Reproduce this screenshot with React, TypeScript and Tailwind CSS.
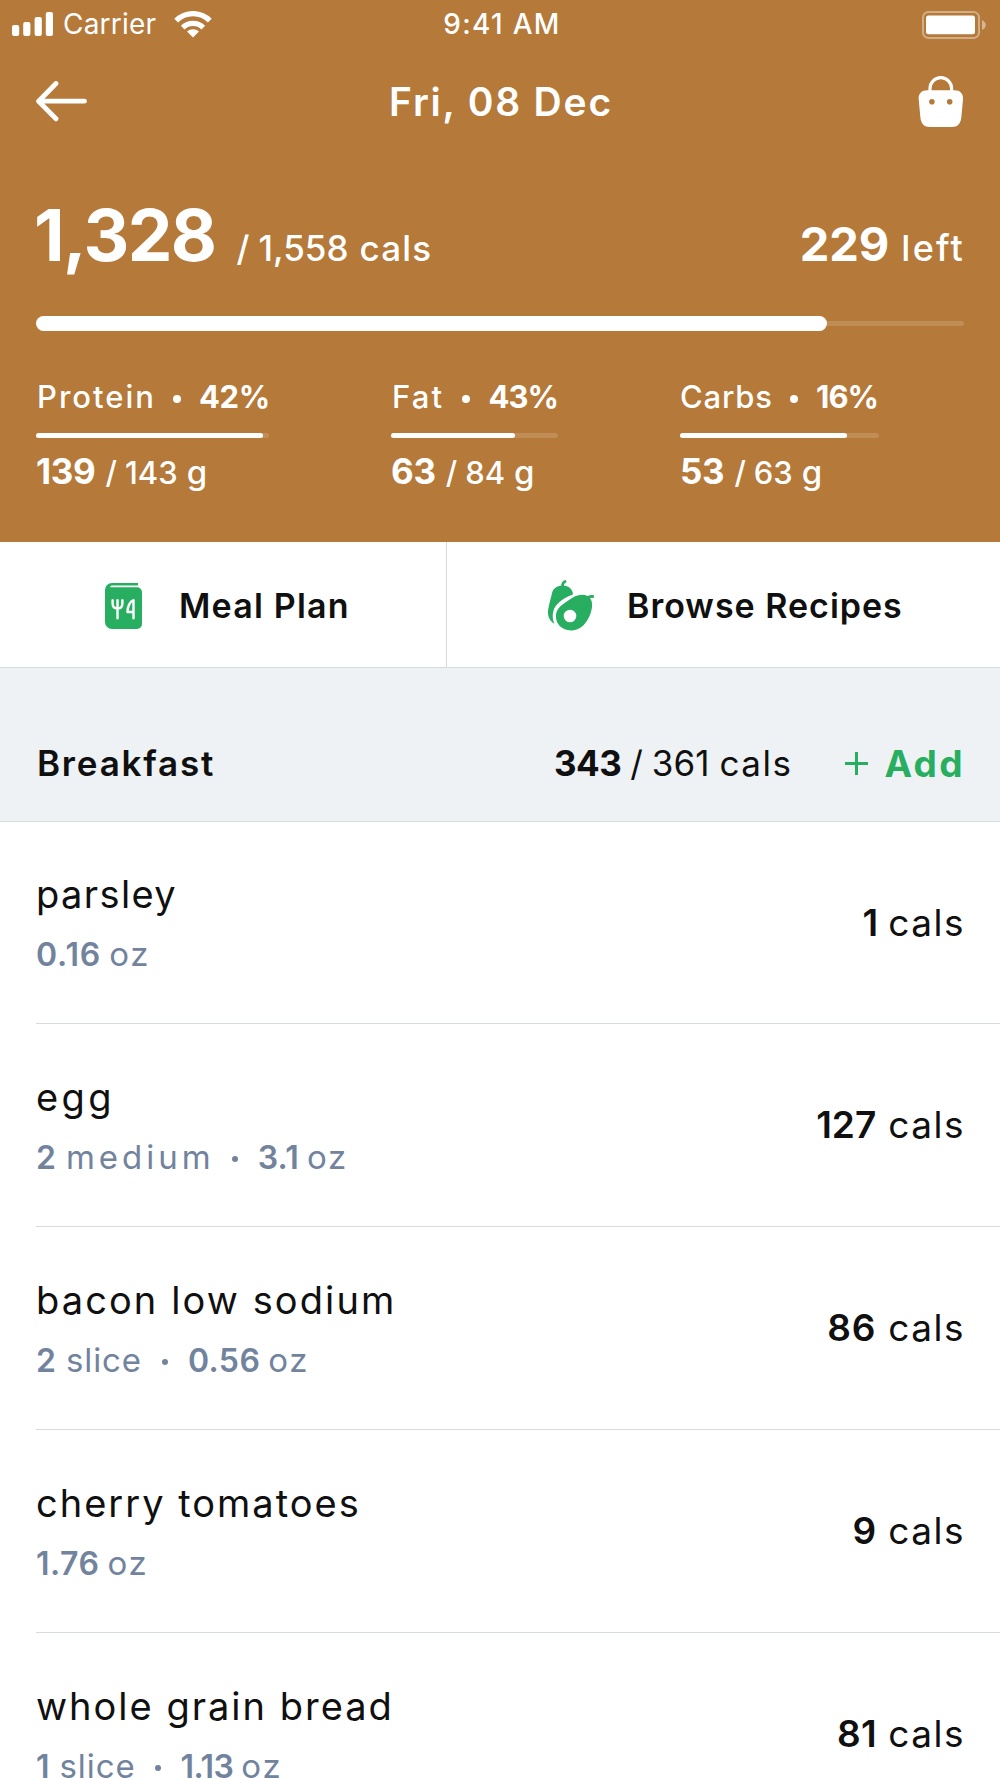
import React from 'react';

interface Macro {
  name: string;
  nameClass: string;
  percent: string;
  percentClass: string;
  eaten: number;
  goal: number;
  fill: number;
  width: string;
}

interface Food {
  name: string;
  nameClass: string;
  serving?: { count: string; unit: string; unitClass: string };
  ounces: string;
  ouncesClass: string;
  cals: number;
  calsClass: string;
}

const MACROS: Macro[] = [
  { name: 'Protein', nameClass: 'ml-px tracking-[2px]', percent: '42%', percentClass: '-mr-px tracking-[-0.3px]', eaten: 139, goal: 143, fill: 97.6, width: 'w-[233px]' },
  { name: 'Fat', nameClass: 'ml-px tracking-[2.2px]', percent: '43%', percentClass: 'tracking-[-1px]', eaten: 63, goal: 84, fill: 74, width: 'w-[167px]' },
  { name: 'Carbs', nameClass: 'tracking-[0.8px]', percent: '16%', percentClass: 'mr-px tracking-[-1px]', eaten: 53, goal: 63, fill: 83.7, width: 'w-[199px]' },
];

const FOODS: Food[] = [
  { name: 'parsley', nameClass: 'tracking-[1.4px]', ounces: '0.16', ouncesClass: 'tracking-[0.9px]', cals: 1, calsClass: 'mr-[10px]' },
  { name: 'egg', nameClass: 'tracking-[3.4px]', serving: { count: '2', unit: 'medium', unitClass: 'tracking-[4px] mr-[17px]' }, ounces: '3.1', ouncesClass: 'tracking-[0.2px]', cals: 127, calsClass: 'mr-[12px]' },
  { name: 'bacon low sodium', nameClass: 'tracking-[2.1px]', serving: { count: '2', unit: 'slice', unitClass: 'tracking-[0.9px] mr-[20px]' }, ounces: '0.56', ouncesClass: 'tracking-[0.4px]', cals: 86, calsClass: 'mr-[12px] tracking-[0.8px]' },
  { name: 'cherry tomatoes', nameClass: 'tracking-[2px]', ounces: '1.76', ouncesClass: 'tracking-[0.5px]', cals: 9, calsClass: 'mr-[12px]' },
  { name: 'whole grain bread', nameClass: 'tracking-[2px]', serving: { count: '1', unit: 'slice', unitClass: 'tracking-[0.9px] mr-[19px]' }, ounces: '1.13', ouncesClass: 'tracking-[-0.5px]', cals: 81, calsClass: 'mr-[11px] tracking-[0.5px]' },
];

const SignalIcon = () => (
  <svg width="41" height="24" viewBox="0 0 41 24" fill="currentColor">
    <rect x="0" y="13" width="7.2" height="11" rx="2" />
    <rect x="11.2" y="10" width="7.2" height="14" rx="2" />
    <rect x="22.6" y="5" width="7.2" height="19" rx="2" />
    <rect x="33.8" y="0" width="7.2" height="24" rx="2" />
  </svg>
);

const WifiIcon = () => (
  <svg width="38" height="27" viewBox="0 0 38 27" fill="none" stroke="currentColor">
    <path d="M2.2 9.7a23.6 23.6 0 0 1 33.6 0" strokeWidth="5.4" />
    <path d="M8.7 16.6a14.6 14.6 0 0 1 20.6 0" strokeWidth="5.2" />
    <path d="M13 20.6a8.6 8.6 0 0 1 12 0L19 26.6Z" fill="currentColor" stroke="none" />
  </svg>
);

const BatteryIcon = () => (
  <svg width="65" height="28" viewBox="0 0 65 28" fill="none">
    <rect x="1" y="1" width="56" height="26" rx="5.5" stroke="white" strokeOpacity="0.4" strokeWidth="2" />
    <rect x="4" y="4.5" width="49" height="18.7" rx="2.5" fill="white" />
    <path d="M60 9c5 2 5 8 0 10Z" fill="white" fillOpacity="0.45" />
  </svg>
);

const BackIcon = () => (
  <svg width="51" height="41" viewBox="0 0 51 41" fill="none" stroke="currentColor" strokeWidth="4.8" strokeLinecap="round" strokeLinejoin="round">
    <path d="M20 2.5 2.6 20.2 20 37.8M3 20.2H48.5" />
  </svg>
);

const BagIcon = () => (
  <svg width="46" height="51" viewBox="0 0 46 51" fill="none">
    <path d="M12 16v-3.5a10.8 10.8 0 0 1 21.6 0V16" stroke="white" strokeWidth="3.2" />
    <path
      fillRule="evenodd"
      fill="white"
      d="M9.5 14.3h26.7c6 0 9.3 3.3 8.8 9.2l-1.7 18c-.6 6.2-3.7 9.5-9.5 9.5H11.9c-5.8 0-8.9-3.3-9.5-9.5l-1.7-18c-.5-5.9 2.8-9.2 8.8-9.2ZM13.9 23a2.8 2.8 0 1 0 0 5.600 2.8 2.8 0 0 0 0-5.600Zm17.8 0a2.8 2.8 0 1 0 0 5.600 2.8 2.8 0 0 0 0-5.600Z"
    />
  </svg>
);

const MealPlanIcon = () => (
  <svg width="37" height="46" viewBox="0 0 37 46" fill="none">
    <path d="M7 0H33V2.600H7.500C6.200 2.600 5.300 3.200 5 4.300H32a5 5 0 0 1 5 5V41a5 5 0 0 1-5 5H7a7 7 0 0 1-7-7V7a7 7 0 0 1 7-7Z" fill="#27ae60" />
    <g stroke="white" strokeWidth="2.4" strokeLinecap="round" strokeLinejoin="round">
      <path d="M7.6 17.200v3.300c0 3.400 2 5 4.900 5s4.900-1.600 4.900-5v-3.300M12.500 17.200v18" />
      <path d="M28.500 35.200v-18c-3.400 1.200-6 6-6 11.800h6" />
    </g>
  </svg>
);

const AvocadoIcon = () => (
  <svg width="47" height="51" viewBox="0 0 47 51" fill="none">
    <path d="M14.5 7 14.7 4.5Q15 2.3 17 1.5" stroke="#27ae60" strokeWidth="2.8" strokeLinecap="round" />
    <path d="M14 5.5C20 5 25 9 25 14.5 18 17 9 22 6 29 4 35 4.500 40 6.500 43.500 2 41.500-1 36 .3 29 1.500 22 3 18 4 13 5 8.500 9 5.800 14 5.500Z" fill="#27ae60" />
    <path d="M38 19.500Q40.500 16 44.700 16.500" stroke="#27ae60" strokeWidth="2.8" strokeLinecap="round" />
    <path
      fillRule="evenodd"
      fill="#27ae60"
      d="M34 14.800C41 14.500 45 20 44 27 43 36 36 51 23 50.500 14 50 7 44 8 34.500 9 27 16 23.500 21 20c4-3 8-5 13-5.200ZM22 29.700a6.300 6.300 0 1 0 0 12.600 6.300 6.300 0 0 0 0-12.600Z"
    />
  </svg>
);

const PlusIcon = () => (
  <svg width="23" height="23" viewBox="0 0 23 23" fill="none" stroke="currentColor" strokeWidth="3">
    <path d="M11.5 0V23M0 11.500H23" />
  </svg>
);

const MacroColumn = ({ macro }: { macro: Macro }) => (
  <div className={macro.width}>
    <div className="flex h-9 items-center justify-between text-[31px] leading-9">
      <span className={`font-medium ${macro.nameClass}`}>{macro.name}</span>
      <span className="mt-[3px] size-[8px] rounded-full bg-white" />
      <span className={`font-bold ${macro.percentClass}`}>{macro.percent}</span>
    </div>
    <div className="mt-[18px] h-[5px] rounded-full bg-white/15">
      <div className="h-full rounded-full bg-white" style={{ width: `${macro.fill}%` }} />
    </div>
    <div className="mt-[12px] flex items-baseline text-[31px] font-medium leading-[42px]">
      <span className="text-[35px] font-bold tracking-[-0.3px]">{macro.eaten}</span>
      <span className="ml-[10px]">/</span>
      <span className="ml-[8px]">{macro.goal}</span>
      <span className="ml-[9px] text-[33px]">g</span>
    </div>
  </div>
);

const FoodRow = ({ food }: { food: Food }) => (
  <li className="ml-[36px] flex h-[203px] shrink-0 items-center justify-between border-b border-[#d8dbde] pr-[35px] first:h-[202px]">
    <div>
      <div className={`text-[38px] leading-[48px] ${food.nameClass}`}>{food.name}</div>
      <div className="mt-4 flex items-baseline text-[33px] leading-10 text-[#72839d]">
        {food.serving && (
          <>
            <span className="text-[32px] font-semibold">{food.serving.count}</span>
            <span className={`ml-[10px] ${food.serving.unitClass}`}>{food.serving.unit}</span>
            <span className="mr-[20px] mt-[3px] size-[6px] self-center rounded-full bg-[#72839d]" />
          </>
        )}
        <span className={`text-[32px] font-semibold ${food.ouncesClass}`}>{food.ounces}</span>
        <span className="ml-[8px] tracking-[1.8px]">oz</span>
      </div>
    </div>
    <div className="flex text-[37px] leading-[48px]">
      <span className={`font-semibold ${food.calsClass}`}>{food.cals}</span>
      <span className="tracking-[1.5px]">cals</span>
    </div>
  </li>
);

const App: React.FC = () => {
  return (
    <div className="flex h-[1778px] w-[1000px] flex-col overflow-hidden bg-white font-['Inter',sans-serif] text-[#101010]">
      {/* Header */}
      <header className="h-[542px] shrink-0 bg-[#b5793a] text-white">
        <div className="grid h-[48px] grid-cols-3 items-center pl-[12px] pr-[13px] text-[28px] leading-none">
          <div className="flex items-center">
            <SignalIcon />
            <span className="ml-[10px] mr-[18px] tracking-[0.2px]">Carrier</span>
            <WifiIcon />
          </div>
          <span className="pl-[5px] text-center font-medium tracking-[1.3px]">9:41 AM</span>
          <div className="mt-[2px] flex justify-end">
            <BatteryIcon />
          </div>
        </div>

        <nav className="flex h-[106px] items-center justify-between px-[36px]">
          <BackIcon />
          <h1 className="-ml-[3px] text-[39px] font-semibold leading-none tracking-[1.8px]">Fri, 08 Dec</h1>
          <BagIcon />
        </nav>

        <div className="px-[36px]">
          <div className="mt-[45px] flex h-[72px] items-baseline justify-between text-[35px] font-medium leading-[72px]">
            <div className="-ml-[2px] flex items-baseline">
              <span className="text-[71px] font-bold tracking-[-1.6px]">1,328</span>
              <span className="ml-[21px]">/</span>
              <span className="ml-[9px]">1,558</span>
              <span className="ml-[11px] tracking-[1.2px]">cals</span>
            </div>
            <div className="-mr-px flex items-baseline">
              <span className="text-[47px] font-bold">229</span>
              <span className="ml-[12px] text-[36px] tracking-[2.2px]">left</span>
            </div>
          </div>

          <div className="mt-[45px] flex h-[15px] items-center">
            <div className="h-full w-[791px] rounded-full bg-white" />
            <div className="-ml-[3px] h-[5px] flex-1 rounded-r-full bg-white/15" />
          </div>

          <div className="mt-[48px] flex gap-[122px]">
            {MACROS.map(macro => (
              <MacroColumn key={macro.name} macro={macro} />
            ))}
          </div>
        </div>
      </header>

      {/* Shortcuts */}
      <div className="flex h-[126px] shrink-0 border-b border-[#d5dadd] text-[34px] font-semibold leading-none">
        <button className="flex w-[447px] items-center border-r border-[#d5dadd] pl-[105px] pt-[2px]">
          <MealPlanIcon />
          <span className="ml-[37px] tracking-[1.2px]">Meal Plan</span>
        </button>
        <button className="flex flex-1 items-center pl-[101px] pt-[2px]">
          <AvocadoIcon />
          <span className="ml-[32px] tracking-[1px]">Browse Recipes</span>
        </button>
      </div>

      {/* Meal section */}
      <div className="flex h-[154px] shrink-0 items-center border-b border-[#d8dde1] bg-[#eef2f5] pl-[37px] pr-[35px] pt-[36px] text-[35px] leading-[44px]">
        <h2 className="font-semibold tracking-[1.8px]">Breakfast</h2>
        <div className="ml-auto flex">
          <span className="font-bold tracking-[-0.5px]">343</span>
          <span className="ml-[9px]">/</span>
          <span className="ml-[9px]">361</span>
          <span className="ml-[10px] tracking-[1.5px]">cals</span>
        </div>
        <button className="ml-[53px] mt-[2px] flex items-center text-[37px] font-bold text-[#27ae60]">
          <PlusIcon />
          <span className="ml-[16px] tracking-[2.4px]">Add</span>
        </button>
      </div>

      <ul>
        {FOODS.map(food => (
          <FoodRow key={food.name} food={food} />
        ))}
      </ul>
    </div>
  );
};

export default App;
